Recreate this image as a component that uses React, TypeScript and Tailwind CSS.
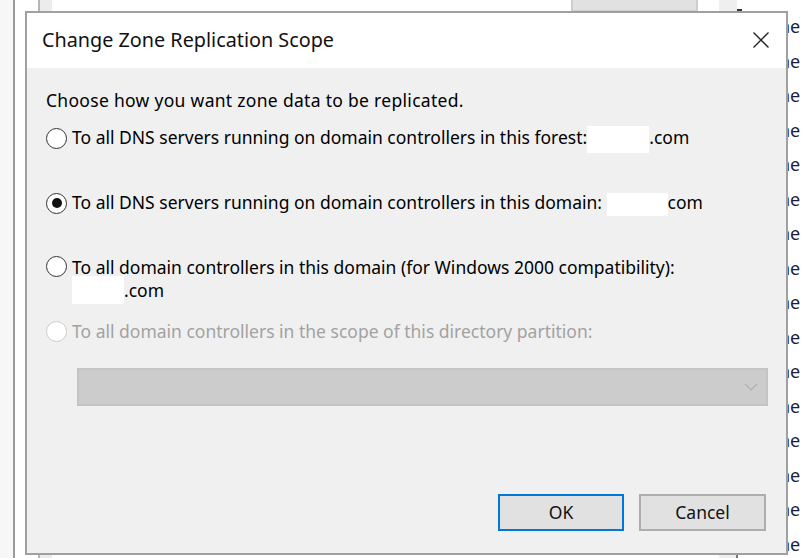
import React from "react";

const font = { fontFamily: '"Noto Sans", "Segoe UI", Arial, sans-serif' };

function Radio({ checked = false, disabled = false }: { checked?: boolean; disabled?: boolean }) {
  return (
    <span
      className={
        "flex h-[21px] w-[21px] shrink-0 items-center justify-center rounded-full border-[1.5px] bg-white " +
        (disabled ? "border-[#cccccc]" : "border-[#333333]")
      }
    >
      {checked ? <span className="h-[10px] w-[10px] rounded-full bg-[#111111]" /> : null}
    </span>
  );
}

// white box that hides the domain name, kept out of the line height
function Blot({ cls }: { cls: string }) {
  return <span className={"inline-block bg-white align-middle " + cls} />;
}

export default function App() {
  const rows = Array.from({ length: 16 });

  return (
    <div className="relative h-[558px] w-[804px] overflow-hidden bg-white text-[17.5px] text-black" style={font}>
      {/* window behind the dialog */}
      <div className="absolute left-0 top-0 h-full w-[13px] bg-[#f7f7f7]" />
      <div className="absolute left-[13px] top-0 h-full w-[2px] bg-[#9a9a9a]" />
      <div className="absolute left-[38px] top-0 h-[12px] w-[14px] border-l-2 border-[#b5b5b5] bg-[#ececec]" />
      <div className="absolute bottom-0 left-[38px] h-[4px] w-[14px] border-l-2 border-[#b5b5b5] bg-[#ececec]" />
      <div className="absolute left-[571px] top-[-2px] h-[14px] w-[127px] border-2 border-[#cdcdcd] bg-[#e1e1e1]" />
      <div className="absolute left-[719px] top-0 h-[12px] w-[18px] bg-[#efefef]" />
      <div className="absolute left-[737px] top-[9px] h-[3px] w-[5px] bg-[#333333]" />
      <div className="absolute bottom-0 left-[719px] h-[4px] w-[18px] bg-[#efefef]" />
      <div className="absolute bottom-0 left-[736px] h-[4px] w-[2px] bg-[#777777]" />
      <div className="absolute left-[779px] top-[17px] flex flex-col gap-[16.5px] text-[18px] leading-[18px] text-[#1c1c3c]">
        {rows.map((_, i) => (
          <span key={i}>ne</span>
        ))}
      </div>

      {/* dialog */}
      <div className="absolute left-[25px] top-[11px] flex h-[544px] w-[763px] flex-col border-2 border-[#a0a0a0] bg-[#f0f0f0]">
        <div className="flex h-[55px] shrink-0 items-center justify-between bg-white pl-[15px] pr-[16px]">
          <span className="pb-[2px] text-[19.8px] text-[#111111]">Change Zone Replication Scope</span>
          <svg width="18" height="18" viewBox="0 0 18 18" className="mb-[2px]">
            <path d="M1.5 1.5 L16.5 16.5 M16.5 1.5 L1.5 16.5" stroke="#222222" strokeWidth="1.4" fill="none" />
          </svg>
        </div>

        <div className="flex flex-1 flex-col pl-[19px] pr-[18px] pt-[22px]">
          <div className="h-[20px] whitespace-nowrap leading-[20px] tracking-[0.3px]">
            Choose how you want zone data to be replicated.
          </div>

          <div className="mt-[17px] flex h-[22px] items-center gap-[5px]">
            <Radio />
            <span className="whitespace-nowrap leading-[22px]">
              To all DNS servers running on domain controllers in this forest:
              <Blot cls="-my-[3px] h-[27px] w-[62px]" />
              .com
            </span>
          </div>

          <div className="mt-[43px] flex h-[22px] items-center gap-[5px]">
            <Radio checked />
            <span className="whitespace-nowrap leading-[22px]">
              To all DNS servers running on domain controllers in this domain:{" "}
              <Blot cls="-my-[1px] h-[23px] w-[61px]" />
              com
            </span>
          </div>

          <div className="mt-[42px] flex items-start gap-[5px]">
            <Radio />
            <div className="flex flex-col leading-[22px]">
              <span className="h-[22px] whitespace-nowrap">To all domain controllers in this domain (for Windows 2000 compatibility):</span>
              <span className="mt-[1px] flex h-[22px] items-center">
                <Blot cls="-my-[3px] h-[28px] w-[52px]" />
                .com
              </span>
            </div>
          </div>

          <div className="mt-[19px] flex h-[22px] items-center gap-[5px]">
            <Radio disabled />
            <span className="whitespace-nowrap leading-[22px] text-[#a2a2a2]">
              To all domain controllers in the scope of this directory partition:
            </span>
          </div>

          <div className="ml-[31px] mt-[26px] flex h-[38px] items-center justify-end border-2 border-[#c4c4c4] bg-[#cccccc] pr-[8px]">
            <svg width="14" height="8" viewBox="0 0 14 8">
              <path d="M1 1 L7 7 L13 1" stroke="#b0b0b0" strokeWidth="1.2" fill="none" />
            </svg>
          </div>

          <div className="mb-[22px] mt-auto flex justify-end gap-[15px] pr-[2px]">
            <button className="h-[37px] w-[126px] border-2 border-[#0078d7] bg-[#e1e1e1] text-[#111111]">OK</button>
            <button className="h-[37px] w-[127px] border-2 border-[#adadad] bg-[#e1e1e1] text-[#111111]">Cancel</button>
          </div>
        </div>
      </div>
    </div>
  );
}
